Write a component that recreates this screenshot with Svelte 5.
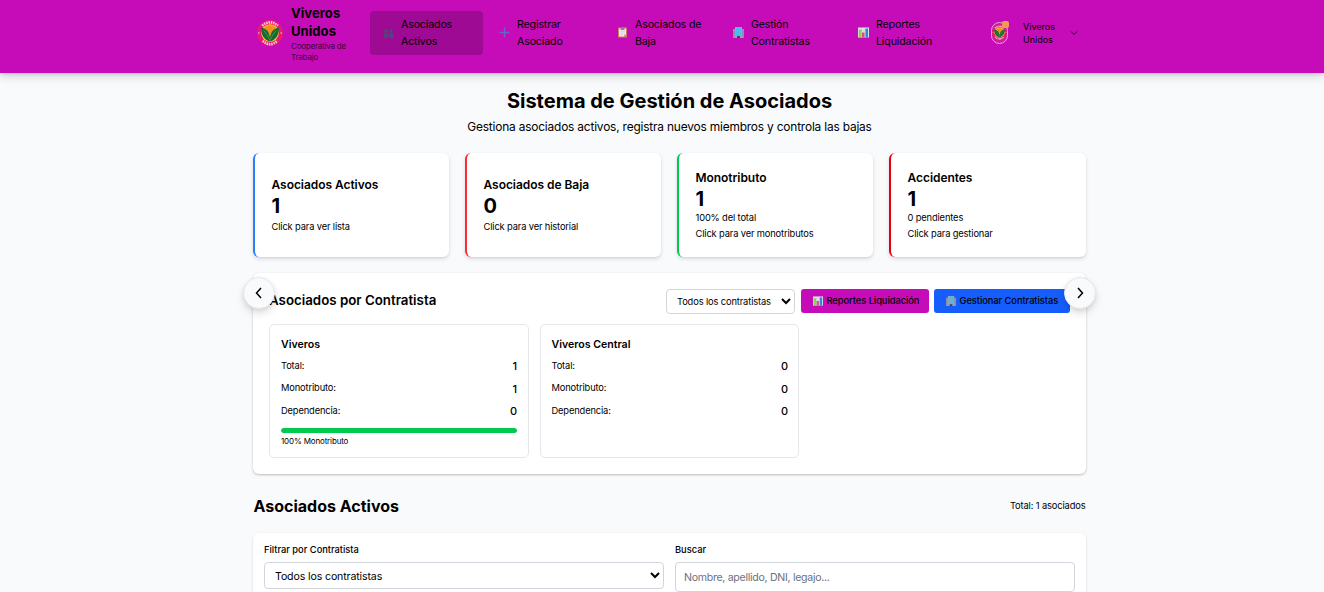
<script>
  const nav = [
    { a: 'Asociados', b: 'Activos', icon: 'people', w: 113, active: true },
    { a: 'Registrar', b: 'Asociado', icon: 'plus', w: 115 },
    { a: 'Asociados de', b: 'Baja', icon: 'clip', w: 113 },
    { a: 'Gestión', b: 'Contratistas', icon: 'building', w: 122 },
    { a: 'Reportes', b: 'Liquidación', icon: 'chart', w: 106 }
  ];
  const stats = [
    { label: 'Asociados Activos', n: 1, color: '#2b7fff', lines: ['Click para ver lista'] },
    { label: 'Asociados de Baja', n: 0, color: '#fb2c36', lines: ['Click para ver historial'] },
    { label: 'Monotributo', n: 1, color: '#00c950', lines: ['100% del total', 'Click para ver monotributos'] },
    { label: 'Accidentes', n: 1, color: '#e7000b', lines: ['0 pendientes', 'Click para gestionar'] }
  ];
  const contractors = [
    { name: 'Viveros', total: 1, mono: 1, dep: 0, pct: 100 },
    { name: 'Viveros Central', total: 0, mono: 0, dep: 0, pct: null }
  ];
</script>

{#snippet icon(name)}
  <svg class="emoji" viewBox="0 0 22 22" aria-hidden="true">
    {#if name === 'people'}
      <g fill="#4f4580"><circle cx="6" cy="6" r="4" /><circle cx="16" cy="6" r="4" /><path d="M1 20v-4c0-4 2-6 5-6s4 2 4.500 4h1c.5-2 2-4 4.500-4 3 0 5 2 5 6v4h-8v-3h-4v3z" /></g>
    {:else if name === 'plus'}
      <path d="M9.500 1h3v8.500H21v3h-8.500V21h-3v-8.500H1v-3h8.500z" fill="#6e62c6" />
    {:else if name === 'clip'}
      <rect x="2" y="1" width="18" height="20" rx="1" fill="#d9795e" /><path d="M4 3h14v12l-4 4H4z" fill="#eee9f3" /><path d="M7 1h8v5H7z" fill="#8b829b" /><path d="M7 9h9M7 12h9M7 15h5" stroke="#c8bfd5" /><path d="M14 19v-4h4z" fill="#b1a8c2" />
    {:else if name === 'building'}
      <path d="M0 4h6v18H0zM16 4h6v18h-6z" fill="#9090a8" /><rect x="4" y="0" width="14" height="22" fill="#8aa9c3" /><path d="M6 3h10M6 7h10M6 11h10M6 15h10" stroke="#45b9ea" stroke-width="2.600" stroke-dasharray="2.600 1" /><path d="M8 18h6v4H8z" fill="#41445c" /><path d="M1 8h2M1 12h2M1 16h2M19 8h2M19 12h2M19 16h2" stroke="#6e9fbd" stroke-width="2" />
    {:else}
      <rect width="22" height="20" y="1" fill="#e2e3ea" /><path d="M0 7h22M0 13h22M7 1v20M14 1v20" stroke="#b9bfc9" stroke-width=".7" /><path d="M1.500 5h5.500v16H1.500z" fill="#8bd057" /><path d="M8 11h5v10H8z" fill="#e14b78" /><path d="M15 3h5v18h-5z" fill="#2d86d7" />
    {/if}
  </svg>
{/snippet}

{#snippet emblem()}
  <svg viewBox="0 0 50 50" aria-hidden="true">
    <circle cx="25" cy="25" r="25" fill="#e51b72" />
    <path d="M10 11Q25-2 40 11M11 40Q25 53 39 40" fill="none" stroke="#f8c3d6" stroke-width="5" stroke-dasharray="3 1.500" />
    <circle cx="3.500" cy="25" r="1.500" fill="#f8c3d6" /><circle cx="46.500" cy="25" r="1.500" fill="#f8c3d6" />
    <circle cx="25" cy="25" r="17" fill="#f3d31e" />
    <path d="M12 19a14 14 0 0 1 26 0Q29 21 25 28 21 21 12 19z" fill="#f2901c" />
    <path d="M8 15c10 1 16 9 17 18 1-9 7-17 17-18 1 13-6 24-17 26C14 39 7 28 8 15z" fill="#176a38" />
    <path d="M13 20q7 8 12 19 5-11 12-19" fill="none" stroke="#5d9c32" stroke-width="1.500" />
  </svg>
{/snippet}

<header>
  <div class="bar">
    <div class="brand">
      <span class="logo">{@render emblem()}</span>
      <div>
        <div class="name">Viveros<br />Unidos</div>
        <div class="sub">Cooperativa de<br />Trabajo</div>
      </div>
    </div>
    <nav>
      {#each nav as item}
        <a class:active={item.active} style="width:{item.w}px">
          {@render icon(item.icon)}
          <span>{item.a}<br />{item.b}</span>
        </a>
      {/each}
    </nav>
    <div class="user">
      <span class="avatar">{@render emblem()}<i></i></span>
      <span class="uname">Viveros<br />Unidos</span>
      <svg class="down" viewBox="0 0 8 6"><path d="M1 1.500l3 3 3-3" fill="none" stroke="#260323" stroke-width=".9" /></svg>
    </div>
  </div>
</header>

<main>
  <div class="intro">
    <h1>Sistema de Gestión de Asociados</h1>
    <p>Gestiona asociados activos, registra nuevos miembros y controla las bajas</p>
  </div>

  <div class="stats">
    {#each stats as s}
      <div class="stat" class:multi={s.lines.length > 1} style="border-left-color:{s.color}">
        <h3>{s.label}</h3>
        <strong>{s.n}</strong>
        {#each s.lines as line}<p>{line}</p>{/each}
      </div>
    {/each}
  </div>

  <section class="panel">
    <button class="round prev" aria-label="Anterior"><svg viewBox="0 0 14 14"><path d="M9 2L4.500 7 9 12" /></svg></button>
    <button class="round next" aria-label="Siguiente"><svg viewBox="0 0 14 14"><path d="M5 2l4.500 5L5 12" /></svg></button>
    <div class="head">
      <h2>Asociados por Contratista</h2>
      <div class="tools">
        <select><option>Todos los contratistas</option></select>
        <button class="btn pink">{@render icon('chart')}<span>Reportes Liquidación</span></button>
        <button class="btn blue">{@render icon('building')}<span>Gestionar Contratistas</span></button>
      </div>
    </div>
    <div class="grid">
      {#each contractors as c}
        <article>
          <h4>{c.name}</h4>
          <div class="row"><span>Total:</span><b>{c.total}</b></div>
          <div class="row mid"><span>Monotributo:</span><b>{c.mono}</b></div>
          <div class="row"><span>Dependencia:</span><b>{c.dep}</b></div>
          {#if c.pct !== null}
            <div class="track"><div style="width:{c.pct}%"></div></div>
            <small>{c.pct}% Monotributo</small>
          {/if}
        </article>
      {/each}
    </div>
  </section>

  <div class="listhead">
    <h2>Asociados Activos</h2>
    <span>Total: 1 asociados</span>
  </div>

  <section class="filters">
    <label><span>Filtrar por Contratista</span><select><option>Todos los contratistas</option></select></label>
    <label><span>Buscar</span><input placeholder="Nombre, apellido, DNI, legajo..." /></label>
  </section>
</main>

<style>
  :global(html) { overflow: hidden; }
  :global(body) { background: #f9fafb; height: 592px; overflow: hidden; }
  :global(#app) { font-family: Inter, "Liberation Sans", sans-serif; color: #000; }
  * { box-sizing: border-box; }
  h1, h2, h3, h4, p { margin: 0; }
  svg { display: block; }
  header { height: 73px; background: #c60cb8; box-shadow: 0 3px 10px rgba(0,0,0,.17), 0 1px 3px rgba(0,0,0,.12); position: relative; }
  .bar { width: 833px; height: 73px; margin-left: 253px; display: flex; align-items: center; }
  .brand { width: 117px; padding-left: 4px; display: flex; gap: 8px; align-items: center; }
  .logo { width: 26px; height: 26px; margin-top: -7px; }
  .brand > div { margin-top: -7px; }
  .name { font-size: 13px; line-height: 18px; font-weight: 700; letter-spacing: .07px; }
  .sub { font-size: 8px; line-height: 11px; opacity: .7; margin-top: 1px; letter-spacing: -.2px; }
  nav { display: flex; margin-top: -7px; gap: 3px; }
  nav a { height: 44px; display: flex; align-items: center; gap: 7px; padding: 0 0 0 13px; font-size: 10.600px; line-height: 17px; letter-spacing: -.13px; white-space: nowrap; border-radius: 4px; }
  nav a.active { background: #9e0a93; }
  .emoji { width: 11px; height: 11px; flex: none; }
  nav .emoji { margin-top: -2px; }
  nav a.active .emoji { margin-top: 0; }
  .user { display: flex; align-items: center; margin: -8px 0 0 40px; }
  .avatar { width: 17px; height: 22px; border: 1px solid #e0a4ea; border-radius: 9px; padding: 2px 0; position: relative; background: #d31a9c; }
  .avatar i { position: absolute; right: -2px; top: -2px; width: 7px; height: 7px; border-radius: 2px; background: #ef9b55; }
  .uname { font-size: 9px; line-height: 13px; margin-left: 15px; width: 47px; }
  .down { width: 8px; height: 6px; }

  main { width: 833px; margin-left: 253px; }
  .intro { text-align: center; padding-top: 15px; height: 80px; }
  h1 { font-size: 20px; line-height: 26px; font-weight: 700; }
  .intro p { font-size: 11.900px; line-height: 18px; margin-top: 4px; letter-spacing: -.18px; }
  .stats { display: grid; grid-template-columns: 196px 196px 196px 1fr; gap: 16px; }
  .stat { height: 104px; background: #fff; border-left: 2px solid; border-radius: 6px; padding: 1px 0 0 16.500px; box-shadow: 0 2px 4px rgba(0,0,0,.12), 0 1px 2px rgba(0,0,0,.06); display: flex; flex-direction: column; justify-content: center; }
  .stat h3 { font-size: 12px; line-height: 18px; font-weight: 600; letter-spacing: -.05px; }
  .stat strong { font-size: 20px; line-height: 25px; font-weight: 700; }
  .stat.multi strong { margin-bottom: -2px; }
  .stat p { font-size: 9.300px; line-height: 16px; letter-spacing: -.13px; }

  .panel { position: relative; margin-top: 16px; height: 201px; padding: 16px; background: #fff; border-radius: 6px; box-shadow: 0 1px 3px rgba(0,0,0,.16), 0 1px 2px rgba(0,0,0,.1); }
  .round { position: absolute; top: 4px; width: 32px; height: 32px; border-radius: 50%; border: 1px solid #e5e7eb; background: #f9fafb; padding: 0; display: grid; place-items: center; box-shadow: 0 5px 9px rgba(0,0,0,.1), 0 2px 4px rgba(0,0,0,.08); }
  .round svg { width: 14px; height: 14px; fill: none; stroke: #000; stroke-width: 1.500; }
  .prev { left: -10px; }
  .next { right: -10px; }
  .head { display: flex; justify-content: space-between; height: 25px; align-items: flex-start; }
  .head h2 { font-size: 13.300px; line-height: 23px; font-weight: 600; }
  .tools { display: flex; }
  select, input { font-family: inherit; color: #000; background: #fff; border: 1px solid #d1d5dc; border-radius: 4px; }
  .tools select { width: 129px; height: 25px; font-size: 9.300px; padding: 0 0 0 6px; margin-right: 6px; letter-spacing: -.12px; }
  .btn { height: 24px; border: 0; border-radius: 3px; font: 500 9.300px Inter, sans-serif; display: flex; align-items: center; gap: 4px; padding: 0 0 1px 11.500px; white-space: nowrap; color: #000; letter-spacing: -.04px; }
  .btn .emoji { width: 10px; height: 10px; }
  .pink { width: 128px; background: #c60cb8; margin-right: 5px; }
  .blue { width: 136px; background: #155dfc; }
  .grid { display: grid; grid-template-columns: 260px 259px 1fr; gap: 11px; margin-top: 10px; }
  article { height: 134px; border: 1px solid #e5e7eb; border-radius: 5px; padding: 11px; }
  article + article { padding-left: 10.500px; padding-right: 10px; }
  h4 { font-size: 10.600px; line-height: 17px; font-weight: 600; }
  .row { display: flex; justify-content: space-between; font-size: 9.300px; line-height: 14px; height: 14px; margin-top: 6px; letter-spacing: -.13px; }
  .row.mid { margin: 8px 0 9px; }
  .row b { font-size: 11px; font-weight: 500; line-height: 14px; letter-spacing: 0; }
  .row.mid b { line-height: 16px; }
  .track { height: 5px; border-radius: 3px; background: #e5e7eb; overflow: hidden; margin-top: 10px; }
  .track div { height: 100%; background: #00c950; border-radius: 3px; }
  small { display: block; font-size: 8px; line-height: 11px; margin-top: 3px; letter-spacing: -.15px; }

  .listhead { display: flex; justify-content: space-between; align-items: center; height: 27px; margin: 18px .5px 14px; }
  .listhead h2 { font-size: 16px; font-weight: 700; }
  .listhead span { font-size: 9.300px; letter-spacing: -.12px; }
  .filters { height: 59px; background: #fff; border-radius: 6px 6px 0 0; padding: 10px 11px 0; display: grid; grid-template-columns: 1fr 1fr; gap: 11px; box-shadow: 0 1px 3px rgba(0,0,0,.14); }
  label span { display: block; font-size: 9.300px; line-height: 14px; font-weight: 500; margin-bottom: 5px; }
  .filters select { display: block; width: 100%; height: 27px; font-size: 10.600px; padding: 1px 0 0 6px; letter-spacing: -.13px; }
  .filters input { display: block; width: 100%; height: 30px; font-size: 10.600px; padding: 0 8px; letter-spacing: -.3px; }
  input::placeholder { color: #6b7280; }
</style>
